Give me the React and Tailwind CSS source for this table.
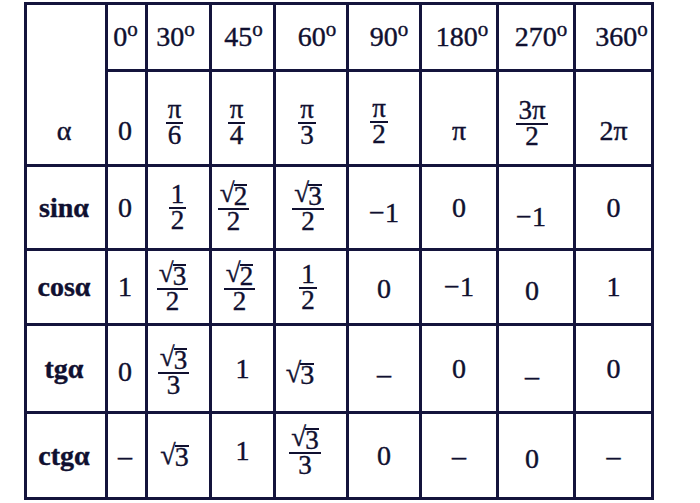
import React from "react";

const ink = "text-[#101030]";

// fraction: numerator over denominator
const F = ({ n, d }) => (
  <span className="inline-flex flex-col items-center text-[27px] leading-[21px]">
    <span className="px-[2px] pb-[2px]">{n}</span>
    <span className="h-[2px] w-full bg-[#101030]" />
    <span className="pt-[1px]">{d}</span>
  </span>
);

// square root with bar over the number
const R = ({ n }) => (
  <span className="inline-flex items-start leading-[21px]">
    <span className="-mr-[1px]">√</span>
    <span className="border-t-2 border-[#101030] leading-[20px] mt-[1px]">{n}</span>
  </span>
);

const Deg = ({ v }) => (
  <span>
    {v}
    <sup>o</sup>
  </span>
);

const degrees = [
  { v: "0", c: "pr-[2px]" },
  { v: "30", c: "pr-[6px]" },
  { v: "45", c: "pl-[2px]" },
  { v: "60", c: "pl-[12px]" },
  { v: "90", c: "pl-[10px]" },
  { v: "180", c: "pl-[6px]" },
  { v: "270", c: "pl-[10px]" },
  { v: "360", c: "pl-[16px]" },
];

const radians = [
  { v: "0", c: "pt-[26px] pr-[3px]" },
  { v: <F n="π" d="6" />, c: "pt-[8px] pr-[8px]" },
  { v: <F n="π" d="4" />, c: "pt-[8px] pr-[12px]" },
  { v: <F n="π" d="3" />, c: "pt-[8px] pr-[8px]" },
  { v: <F n="π" d="2" />, c: "pt-[6px] pr-[10px]" },
  { v: "π", c: "pt-[26px]" },
  { v: <F n="3π" d="2" />, c: "pt-[10px] pr-[8px]" },
  { v: "2π", c: "pt-[26px]" },
];

const rows = [
  {
    label: "sinα",
    cells: [
      { v: "0", c: "pr-[3px]" },
      { v: <F n="1" d="2" />, c: "pr-[2px]" },
      { v: <F n={<R n="2" />} d="2" />, c: "pr-[18px]" },
      { v: <F n={<R n="3" />} d="2" />, c: "pr-[6px]" },
      { v: "−1", c: "pt-[10px]" },
      { v: "0", c: "" },
      { v: "−1", c: "pt-[18px] pr-[10px]" },
      { v: "0", c: "" },
    ],
  },
  {
    label: "cosα",
    cells: [
      { v: "1", c: "pr-[3px]" },
      { v: <F n={<R n="3" />} d="2" />, c: "pr-[12px]" },
      { v: <F n={<R n="2" />} d="2" />, c: "pr-[6px]" },
      { v: <F n="1" d="2" />, c: "pr-[6px]" },
      { v: "0", c: "pt-[4px]" },
      { v: "−1", c: "" },
      { v: "0", c: "pt-[8px] pr-[8px]" },
      { v: "1", c: "" },
    ],
  },
  {
    label: "tgα",
    cells: [
      { v: "0", c: "pt-[6px] pr-[3px]" },
      { v: <F n={<R n="3" />} d="3" />, c: "pt-[6px] pr-[10px]" },
      { v: "1", c: "" },
      { v: <R n="3" />, c: "pt-[10px] pr-[22px]" },
      { v: "–", c: "pt-[10px]" },
      { v: "0", c: "" },
      { v: "–", c: "pt-[14px] pr-[8px]" },
      { v: "0", c: "" },
    ],
  },
  {
    label: "ctgα",
    cells: [
      { v: "–", c: "pr-[3px]" },
      { v: <R n="3" />, c: "pr-[8px]" },
      { v: "1", c: "pb-[10px]" },
      { v: <F n={<R n="3" />} d="3" />, c: "pb-[8px] pr-[12px]" },
      { v: "0", c: "" },
      { v: "–", c: "" },
      { v: "0", c: "pt-[6px] pr-[8px]" },
      { v: "–", c: "" },
    ],
  },
];

const cell = "bg-white flex items-center justify-center";

export default function App() {
  return (
    <div className="w-[700px] h-[503px] bg-white pt-[2px] pl-[24px] font-['Liberation_Serif','Times_New_Roman',serif] text-[28px] leading-none [-webkit-text-stroke:0.4px_#101030]">
      <div
        className={`grid w-fit grid-cols-[78px_37px_61px_61px_70px_70px_74px_74px_75px] grid-rows-[64px_92px_81px_72px_85px_83px] gap-[3px] p-[3px] bg-[#14143c] ${ink}`}
      >
        <div className={`${cell} row-span-2 items-end pb-[19px] pr-[4px]`}>α</div>
        {degrees.map((d, i) => (
          <div key={"d" + i} className={`${cell} ${d.c}`}>
            <Deg v={d.v} />
          </div>
        ))}
        {radians.map((r, i) => (
          <div key={"r" + i} className={`${cell} ${r.c}`}>
            {r.v}
          </div>
        ))}
        {rows.map((row) => (
          <React.Fragment key={row.label}>
            <div className={`${cell} font-bold pr-[4px]`}>{row.label}</div>
            {row.cells.map((c, i) => (
              <div key={i} className={`${cell} ${c.c}`}>
                {c.v}
              </div>
            ))}
          </React.Fragment>
        ))}
      </div>
    </div>
  );
}
